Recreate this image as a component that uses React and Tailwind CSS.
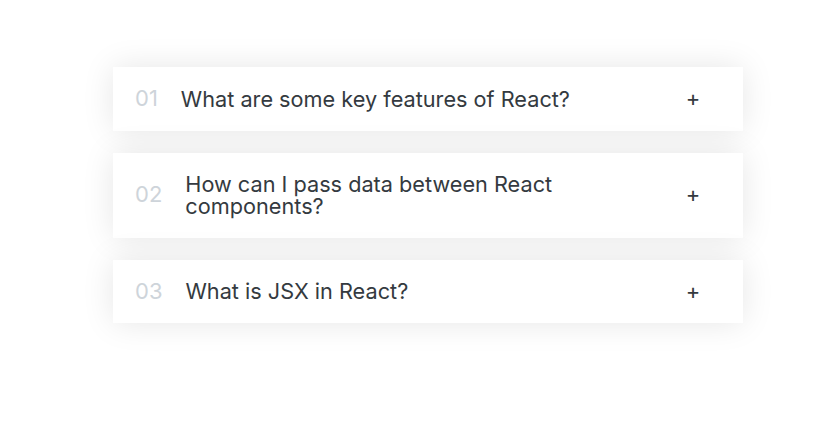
import React from 'react';

const faqs = [
    { num: '01', title: 'What are some key features of React?' },
    { num: '02', title: 'How can I pass data between React components?' },
    { num: '03', title: 'What is JSX in React?' },
];

function Item({ num, title }) {
    return (
        <div className="grid grid-cols-[auto_1fr_auto] items-center gap-x-[23px] bg-white py-5 pl-[22px] pr-[38px] shadow-[0_0_32px_rgba(0,0,0,0.1)]">
            <p className="text-[22px] font-normal leading-[23.5px] text-[#ced4da]">{num}</p>
            <p className="text-[21.7px] font-normal leading-[22.5px] text-[#343a40]">{title}</p>
            <p className="w-6 text-center text-[22px] font-normal leading-[23.5px] text-[#343a40]">+</p>
        </div>
    );
}

export default function App() {
    return (
        <div className="min-h-screen bg-white pl-[113px] pt-[67px] font-['Inter',sans-serif]">
            <div className="flex w-[630px] flex-col gap-[22px]">
                {faqs.map((f) => (
                    <Item key={f.num} {...f} />
                ))}
            </div>
        </div>
    );
}
